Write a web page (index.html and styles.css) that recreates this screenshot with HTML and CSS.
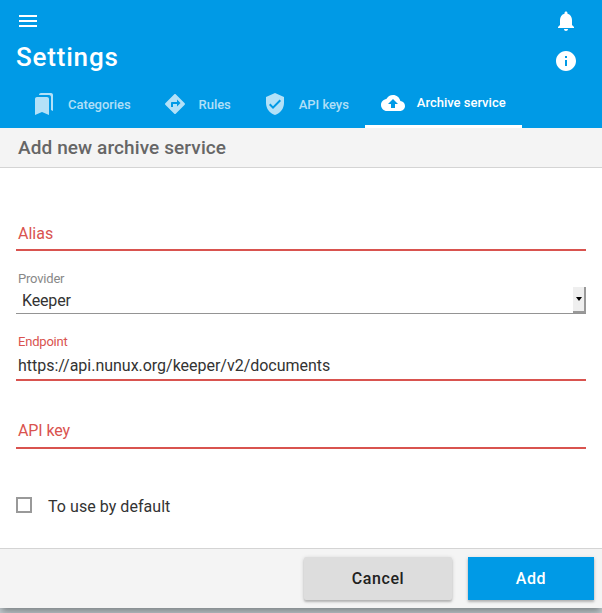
FILE: index.html
```html
<!DOCTYPE html>
<html lang="en">
<head>
<meta charset="utf-8">
<title>Settings</title>
<link rel="stylesheet" href="styles.css">
</head>
<body>
<main class="page">
  <header class="header">
    <div class="bar">
      <svg class="icon" viewBox="0 0 24 24"><path d="M3 18h18v-2H3v2zm0-5h18v-2H3v2zm0-7v2h18V6H3z"/></svg>
      <svg class="icon" viewBox="0 0 24 24"><path d="M12 22c1.1 0 2-.9 2-2h-4c0 1.1.89 2 2 2zm6-6v-5c0-3.07-1.64-5.64-4.5-6.32V4c0-.83-.67-1.5-1.5-1.5s-1.5.67-1.5 1.5v.68C7.63 5.36 6 7.92 6 11v5l-2 2v1h16v-1l-2-2z"/></svg>
    </div>
    <div class="bar title-bar">
      <h1 class="title">Settings</h1>
      <svg class="icon" viewBox="0 0 24 24"><path d="M12 2C6.48 2 2 6.48 2 12s4.48 10 10 10 10-4.48 10-10S17.52 2 12 2zm1 15h-2v-6h2v6zm0-8h-2V7h2v2z"/></svg>
    </div>
    <nav class="tabs">
      <a class="tab"><svg class="icon" viewBox="0 0 24 24"><path d="M19 18l2 1V3c0-1.1-.9-2-2-2H8.99C7.89 1 7 1.9 7 3h10c1.1 0 2 .9 2 2v13zM15 5H5c-1.1 0-2 .9-2 2v16l7-3 7 3V7c0-1.1-.9-2-2-2z"/></svg><span>Categories</span></a>
      <a class="tab"><svg class="icon" viewBox="0 0 24 24"><path d="M21.71 11.29l-9-9c-.39-.39-1.02-.39-1.41 0l-9 9c-.39.39-.39 1.02 0 1.41l9 9c.39.39 1.02.39 1.41 0l9-9c.39-.38.39-1.01 0-1.41zM14 14.5V12h-4v3H8v-4c0-.55.45-1 1-1h5V7.5l3.5 3.5-3.5 3.5z"/></svg><span>Rules</span></a>
      <a class="tab"><svg class="icon" viewBox="0 0 24 24"><path d="M12 1L3 5v6c0 5.55 3.84 10.74 9 12 5.16-1.26 9-6.45 9-12V5l-9-4zm-2 16l-4-4 1.41-1.41L10 14.17l6.59-6.59L18 9l-8 8z"/></svg><span>API keys</span></a>
      <a class="tab active"><svg class="icon" viewBox="0 0 24 24"><path d="M19.35 10.04C18.67 6.59 15.64 4 12 4 9.11 4 6.6 5.64 5.35 8.04 2.34 8.36 0 10.91 0 14c0 3.31 2.69 6 6 6h13c2.76 0 5-2.24 5-5 0-2.64-2.05-4.78-4.65-4.96zM14 13v4h-4v-4H7l5-5 5 5h-3z"/></svg><span>Archive service</span></a>
    </nav>
  </header>
  <h2 class="subtitle">Add new archive service</h2>
  <form class="form">
    <div class="field alias">Alias</div>
    <div class="label">Provider</div>
    <div class="select"><span>Keeper</span><span class="drop"></span></div>
    <div class="label invalid">Endpoint</div>
    <div class="field value">https://api.nunux.org/keeper/v2/documents</div>
    <div class="field api">API key</div>
    <div class="check"><span class="box"></span><span>To use by default</span></div>
  </form>
  <footer class="actions">
    <button class="btn cancel" type="button">Cancel</button>
    <button class="btn add" type="button">Add</button>
  </footer>
</main>
</body>
</html>
```
FILE: styles.css
```css
* { box-sizing: border-box; }
html { height: 613px; overflow: hidden; }
body {
  margin: 0;
  height: 613px;
  overflow: hidden;
  background: #cfd8dc;
  font-family: Roboto, sans-serif;
  font-size: 16px;
  color: #333;
}
.page {
  height: 608px;
  background: #fff;
  box-shadow: 0 8px 10px 1px rgba(0,0,0,.14), 0 3px 14px 2px rgba(0,0,0,.12), 0 5px 5px -3px rgba(0,0,0,.2);
}
.header { height: 128px; background: #009ae6; color: #fff; }
.icon { width: 24px; height: 24px; fill: currentColor; flex: none; display: block; }
.bar { display: flex; justify-content: space-between; padding: 9px 24px 0 16px; height: 37px; }
.title-bar { height: 43px; padding-top: 0; align-items: center; }
.title-bar .icon { margin-top: 5px; }
.title { margin: -4px 0 0; font-size: 26px; font-weight: 500; letter-spacing: .8px; line-height: 36px; }
.tabs { display: flex; height: 48px; padding-left: 16px; font-size: 13px; font-weight: 500; letter-spacing: -.05px; }
.tab { display: flex; align-items: center; gap: 12px; padding: 0 16px; height: 48px; color: rgba(255,255,255,.7); white-space: nowrap; }
.active { color: #fff; border-bottom: 3px solid #fff; letter-spacing: 0; }
.subtitle { margin: 0; height: 40px; padding-left: 18px; background: #f4f4f4; border-bottom: 1px solid #d4d4d4; color: #666; font-size: 19px; font-weight: 500; letter-spacing: .1px; line-height: 39px; }
.form { height: 380px; padding: 48px 16px 0; }
.field { height: 35px; padding-left: 2px; line-height: 36px; border-bottom: 2px solid #d9534f; color: #d9534f; }
.label { height: 16px; margin-top: 20px; padding-left: 2px; font-size: 13px; line-height: 16px; letter-spacing: -.2px; color: #888; }
.invalid { margin-top: 20px; color: #d9534f; }
.select { display: flex; justify-content: space-between; height: 27px; padding-left: 6px; line-height: 27px; letter-spacing: -.15px; border-bottom: 1px solid #949494; }
.drop { display: flex; align-items: center; justify-content: center; width: 13px; height: 26px; background: #efefef; border-right: 2px solid #999; border-bottom: 2px solid #999; }
.drop::before { content: ""; border: 3.5px solid transparent; border-top: 4px solid #000; border-bottom: 0; }
.value { height: 31px; line-height: 31px; letter-spacing: -.02px; color: #333; }
.api { margin-top: 33px; line-height: 34px; letter-spacing: -.1px; }
.check { display: flex; align-items: center; gap: 16px; height: 24px; margin-top: 44px; letter-spacing: .05px; }
.check span:last-child { padding-top: 2px; }
.box { width: 16px; height: 16px; border: 2px solid #999; }
.actions { display: flex; justify-content: flex-end; gap: 16px; height: 60px; padding: 8px 8px 0; background: #f4f4f4; border-top: 1px solid #d4d4d4; }
.btn { height: 43px; border: 0; padding: 0; font: 500 16px Roboto, sans-serif; letter-spacing: .6px; box-shadow: 0 2px 2px rgba(0,0,0,.18), 0 1px 4px rgba(0,0,0,.16); }
.cancel { width: 148px; background: #ddd; color: #212121; border-radius: 2px; }
.add { width: 126px; background: #009ae6; color: #fff; }
```
